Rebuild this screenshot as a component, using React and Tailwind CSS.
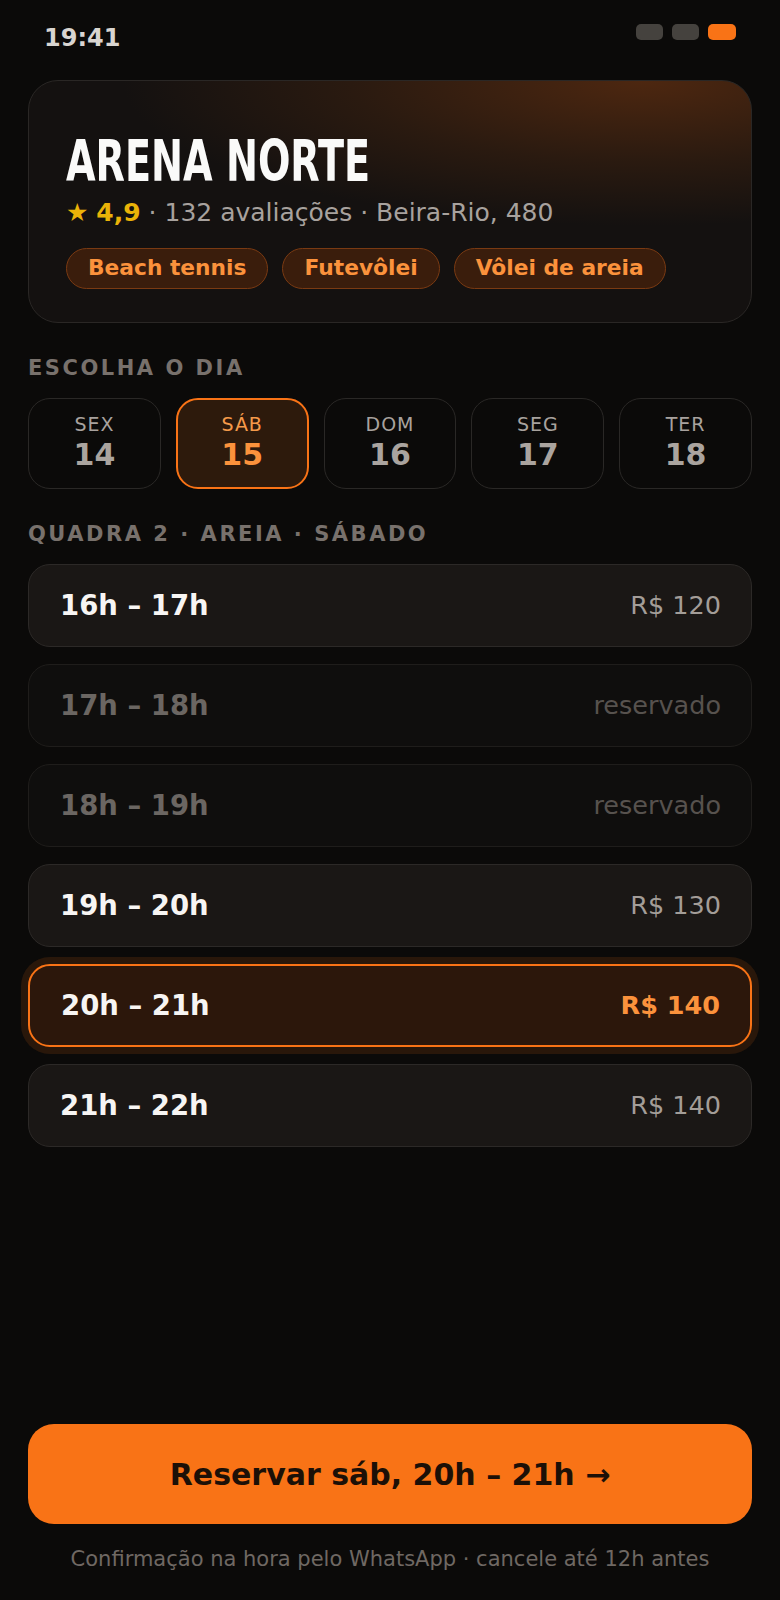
import React from "react";

const days = [
  { wd: "SEX", d: "14" },
  { wd: "SÁB", d: "15", active: true },
  { wd: "DOM", d: "16" },
  { wd: "SEG", d: "17" },
  { wd: "TER", d: "18" },
];

const slots = [
  { time: "16h – 17h", price: "R$ 120" },
  { time: "17h – 18h", booked: true },
  { time: "18h – 19h", booked: true },
  { time: "19h – 20h", price: "R$ 130" },
  { time: "20h – 21h", price: "R$ 140", active: true },
  { time: "21h – 22h", price: "R$ 140" },
];

const tags = ["Beach tennis", "Futevôlei", "Vôlei de areia"];

const Slot = ({ time, price, booked, active }) => {
  if (booked) {
    return (
      <div className="flex h-[83px] items-center justify-between rounded-[22px] border-[1.5px] border-[#1f1d1b] bg-[#0f0e0d] pl-[31px] pr-[30px]">
        <span className="text-[27.5px] font-bold text-[#6b6662]">{time}</span>
        <span className="text-[25.5px] text-[#57524e]">reservado</span>
      </div>
    );
  }
  if (active) {
    return (
      <div className="flex h-[83px] items-center justify-between rounded-[22px] border-2 border-[#f97316] bg-[#2c170b] pl-[31px] pr-[30px] shadow-[0_0_0_7px_rgba(249,115,22,0.13)]">
        <span className="text-[27.5px] font-bold text-[#f7f5f3]">{time}</span>
        <span className="text-[25.5px] font-bold text-[#fb923c]">{price}</span>
      </div>
    );
  }
  return (
    <div className="flex h-[83px] items-center justify-between rounded-[22px] border-[1.5px] border-[#2c2927] bg-[#1a1715] pl-[31px] pr-[30px]">
      <span className="text-[27.5px] font-bold text-[#f7f5f3]">{time}</span>
      <span className="text-[25.5px] text-[#a39d98]">{price}</span>
    </div>
  );
};

export default function App() {
  return (
    <div className="flex h-[1600px] flex-col bg-[#0b0a09] px-7 font-['DejaVu_Sans',sans-serif]">
      {/* status bar */}
      <div className="flex h-[80px] items-start justify-between px-[16px] pt-[24px]">
        <span className="text-[24px] font-bold leading-[28px] text-[#d9d5d1]">19:41</span>
        <div className="flex gap-[9px]">
          <span className="h-[16px] w-[27px] rounded-[5px] bg-[#45423e]" />
          <span className="h-[16px] w-[27px] rounded-[5px] bg-[#45423e]" />
          <span className="h-[16px] w-[28px] rounded-[5px] bg-[#f97316]" />
        </div>
      </div>

      {/* venue card */}
      <div className="rounded-[30px] border-[1.5px] border-[#2a2725] bg-[radial-gradient(ellipse_90%_75%_at_85%_0%,#4d2710_0%,#2a1a10_45%,#141110_80%)] px-[37px] pb-[33px] pt-[52px]">
        <h1 className="origin-left scale-x-[0.745] whitespace-nowrap font-['DejaVu_Sans_Condensed','DejaVu_Sans',sans-serif] text-[57px] font-bold leading-[56px] text-[#fafaf9] font-stretch-condensed">
          ARENA NORTE
        </h1>
        <p className="mt-[6px] text-[25px] leading-[35px] text-[#a8a29e]">
          <span className="text-[#eab308]">★ </span>
          <span className="font-bold text-[#eab308]">4,9</span> · 132 avaliações · Beira-Rio, 480
        </p>
        <div className="mt-[18px] flex gap-[14px]">
          {tags.map((t) => (
            <span
              key={t}
              className="flex h-[41px] items-center rounded-full border-[1.5px] border-[#7a3a12] bg-[#3a1d0c] px-[21px] text-[21.75px] font-bold text-[#fb923c]"
            >
              {t}
            </span>
          ))}
        </div>
      </div>

      {/* day picker */}
      <h2 className="mt-[33px] text-[21px] font-bold leading-[24px] tracking-[0.12em] text-[#78716c]">
        ESCOLHA O DIA
      </h2>
      <div className="mt-[18px] grid grid-cols-5 gap-[15px]">
        {days.map((d) => (
          <div
            key={d.d}
            className={
              d.active
                ? "flex h-[91px] flex-col items-center justify-center gap-[2px] rounded-[22px] border-2 border-[#f97316] bg-[#2d1a0c] pb-[3px]"
                : "flex h-[91px] flex-col items-center justify-center gap-[2px] rounded-[22px] border-[1.5px] border-[#2a2826] bg-[#0b0a09] pb-[3px]"
            }
          >
            <span
              className={
                d.active
                  ? "text-[19px] leading-[24px] tracking-[0.05em] text-[#f59a4a]"
                  : "text-[19px] leading-[24px] tracking-[0.05em] text-[#a8a29e]"
              }
            >
              {d.wd}
            </span>
            <span
              className={
                d.active
                  ? "text-[30px] font-bold leading-[34px] text-[#fb923c]"
                  : "text-[30px] font-bold leading-[34px] text-[#aaa49f]"
              }
            >
              {d.d}
            </span>
          </div>
        ))}
      </div>

      {/* slots */}
      <h2 className="mt-[33px] text-[21px] font-bold leading-[24px] tracking-[0.12em] text-[#78716c]">
        QUADRA 2 · AREIA · SÁBADO
      </h2>
      <div className="mt-[18px] flex flex-col gap-[17px]">
        {slots.map((s) => (
          <Slot key={s.time} {...s} />
        ))}
      </div>

      <div className="flex-1" />

      <button className="flex h-[100px] w-full items-center justify-center rounded-[26px] bg-[#f97316] text-[30px] font-bold text-[#1c1007]">
        Reservar sáb, 20h – 21h →
      </button>
      <p className="mb-[27px] mt-[21px] text-center text-[21px] leading-[28px] text-[#6f6863]">
        Confirmação na hora pelo WhatsApp · cancele até 12h antes
      </p>
    </div>
  );
}
